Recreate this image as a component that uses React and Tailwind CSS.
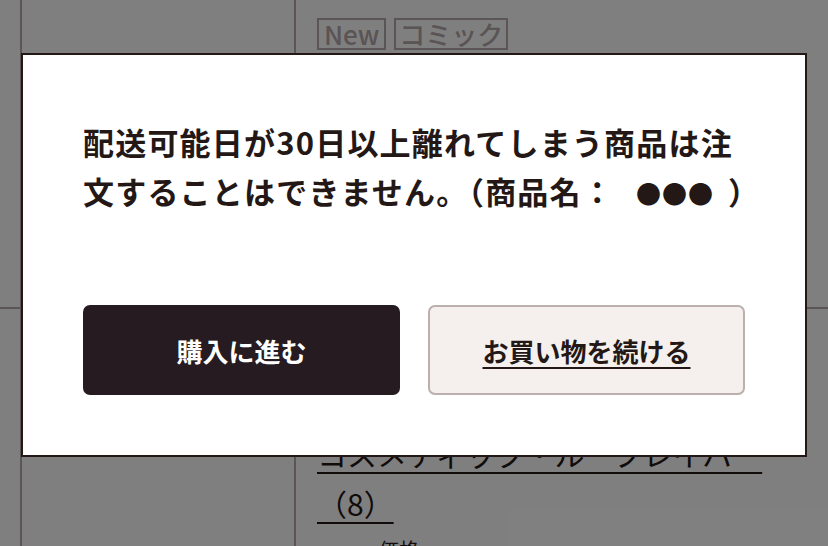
import React from "react";

export default function App() {
  return (
    <div className="relative h-[546px] w-full overflow-hidden bg-white font-['Noto_Sans_CJK_JP','Noto_Sans',sans-serif] text-[#231815]">
      {/* Page behind the dialog */}
      <div className="flex h-[309px] border-b-2 border-[#b8abab]">
        <div className="w-[22px] shrink-0 border-r-2 border-[#b8abab]" />
        <div className="w-[274px] shrink-0 border-r-2 border-[#b8abab]" />
        <div className="flex flex-1 items-start gap-[8px] pl-[21px] pt-[18px]">
          <span className="flex h-[32px] items-center border-2 border-[#b8abab] px-[5px] text-[26px] font-medium leading-none text-[#b5a8a8]">
            New
          </span>
          <span className="flex h-[32px] items-center border-2 border-[#b8abab] px-[3px] text-[26px] font-medium leading-none text-[#b5a8a8]">
            コミック
          </span>
        </div>
      </div>
      <div className="flex h-[237px]">
        <div className="w-[22px] shrink-0 border-r-2 border-[#b8abab]" />
        <div className="w-[274px] shrink-0 border-r-2 border-[#b8abab]" />
        <div className="flex-1 pl-[21px] pt-[119px]">
          <p className="text-[30px] leading-[50px] underline underline-offset-[6px] decoration-2">
            コスメティック・ループレイバー
            <br />
            （8）
          </p>
          <p className="mt-[8px] pl-[62px] text-[20px] leading-[28px]">価格</p>
        </div>
      </div>

      {/* Overlay */}
      <div className="absolute inset-0 flex justify-center bg-black/50 pt-[53px]">
        <div className="h-[404px] w-[786px] border-2 border-[#231815] bg-white px-[60px] pt-[62px]">
          <p className="w-[680px] text-[31px] font-bold leading-[49px] tracking-[1.2px] text-[#231815]">
            配送可能日が30日以上離れてしまう商品は注文することはできません。（商品名：
            <span className="ml-[22px] mr-[14px] text-[25px] leading-none tracking-[1px]">●●●</span>）
          </p>
          <div className="mt-[90px] grid grid-cols-2 gap-[28px]">
            <button className="flex h-[90px] items-center justify-center rounded-[7px] bg-[#261b20] text-[26px] font-bold text-white">
              購入に進む
            </button>
            <button className="flex h-[90px] items-center justify-center rounded-[7px] border-2 border-[#bbb0ad] bg-[#f5f0ee] text-[26px] font-bold text-[#231815] underline decoration-2 underline-offset-[5px]">
              お買い物を続ける
            </button>
          </div>
        </div>
      </div>
    </div>
  );
}
